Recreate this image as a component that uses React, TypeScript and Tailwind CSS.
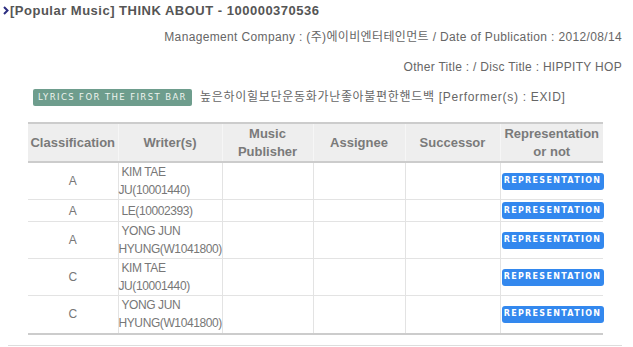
const rows = [
  { cls: "A", writer: ["\u00a0KIM TAE", "JU(10001440)"], h: "h-[36px]" },
  { cls: "A", writer: ["\u00a0LE(10002393)"], h: "h-[22px]" },
  { cls: "A", writer: ["\u00a0YONG JUN", "HYUNG(W1041800)"], h: "h-[37px]" },
  { cls: "C", writer: ["\u00a0KIM TAE", "JU(10001440)"], h: "h-[37px]" },
  { cls: "C", writer: ["\u00a0YONG JUN", "HYUNG(W1041800)"], h: "h-[38px]" },
];

const font = "font-['Liberation_Sans','Noto_Sans_CJK_KR',sans-serif]";

export default function App() {
  return (
    <div className={`w-[633px] h-[347px] bg-white text-[12px] text-[#666] ${font}`}>
      <div className="pt-[3px] pl-[3px] flex items-center h-[18px]">
        <svg width="6" height="9" viewBox="0 0 6 9" className="mr-[1px]">
          <path d="M1 1 L4.5 4.5 L1 8" stroke="#2b2d80" strokeWidth="2" fill="none" />
        </svg>
        <span className="text-[13px] font-bold text-[#555] tracking-[0.5px]">
          [Popular Music] THINK ABOUT - 100000370536
        </span>
      </div>

      <div className="mt-[12px] pr-[11px] text-right leading-[14px] tracking-[0.35px]">
        Management Company : (주)에이비엔터테인먼트 / Date of Publication : 2012/08/14
      </div>
      <div className="mt-[16px] pr-[11px] text-right leading-[14px] tracking-[0.3px]">
        Other Title : / Disc Title : HIPPITY HOP
      </div>

      <div className="mt-[14px] pl-[33px] flex items-center gap-[8px]">
        <span className="bg-[#6e9d8d] text-[#eef4ef] text-[8.5px] tracking-[1.4px] rounded-[2px] h-[17px] w-[159px] flex items-center justify-center font-['DejaVu_Sans',sans-serif]">
          LYRICS FOR THE FIRST BAR
        </span>
        <span className="tracking-[0.7px]">높은하이힐보단운동화가난좋아불편한핸드백 [Performer(s) : EXID]</span>
      </div>

      <table className="mt-[16px] ml-[28px] w-[575px] border-collapse table-fixed">
        <colgroup>
          <col className="w-[90px]" />
          <col className="w-[104px]" />
          <col className="w-[91px]" />
          <col className="w-[92px]" />
          <col className="w-[95px]" />
          <col className="w-[103px]" />
        </colgroup>
        <thead>
          <tr className="bg-[#eeeeee] border-t-2 border-b-2 border-[#cccccc] h-[39px] text-[#7a7a7a] text-[13px] font-bold leading-[18px]">
            <th className="font-bold">Classification</th>
            <th className="font-bold border-l border-[#f6f6f6]">Writer(s)</th>
            <th className="font-bold border-l border-[#f6f6f6]">Music<br />Publisher</th>
            <th className="font-bold border-l border-[#f6f6f6]">Assignee</th>
            <th className="font-bold border-l border-[#f6f6f6]">Successor</th>
            <th className="font-bold border-l border-[#f6f6f6]">Representation<br />or not</th>
          </tr>
        </thead>
        <tbody className="border-b-2 border-[#cccccc]">
          {rows.map((r, i) => (
            <tr key={i} className={`${r.h} border-t border-[#e3e3e3] text-[#777] leading-[18px]`}>
              <td className="text-center">{r.cls}</td>
              <td className="border-l border-[#e3e3e3] p-0 whitespace-nowrap tracking-[-0.4px]">
                {r.writer.map((l, j) => (
                  <div key={j}>{l}</div>
                ))}
              </td>
              <td className="border-l border-[#e3e3e3]"></td>
              <td className="border-l border-[#e3e3e3]"></td>
              <td className="border-l border-[#e3e3e3]"></td>
              <td className="border-l border-[#e3e3e3] p-0">
                <span className="ml-[1px] flex items-center justify-center h-[17px] w-[102px] rounded-[3px] bg-[#3388ee] text-white text-[8px] font-bold tracking-[1.3px] font-['DejaVu_Sans',sans-serif]">
                  REPRESENTATION
                </span>
              </td>
            </tr>
          ))}
        </tbody>
      </table>

      <div className="mt-[10px] ml-[8px] w-[614px] border-t border-[#dddddd]"></div>
    </div>
  );
}
